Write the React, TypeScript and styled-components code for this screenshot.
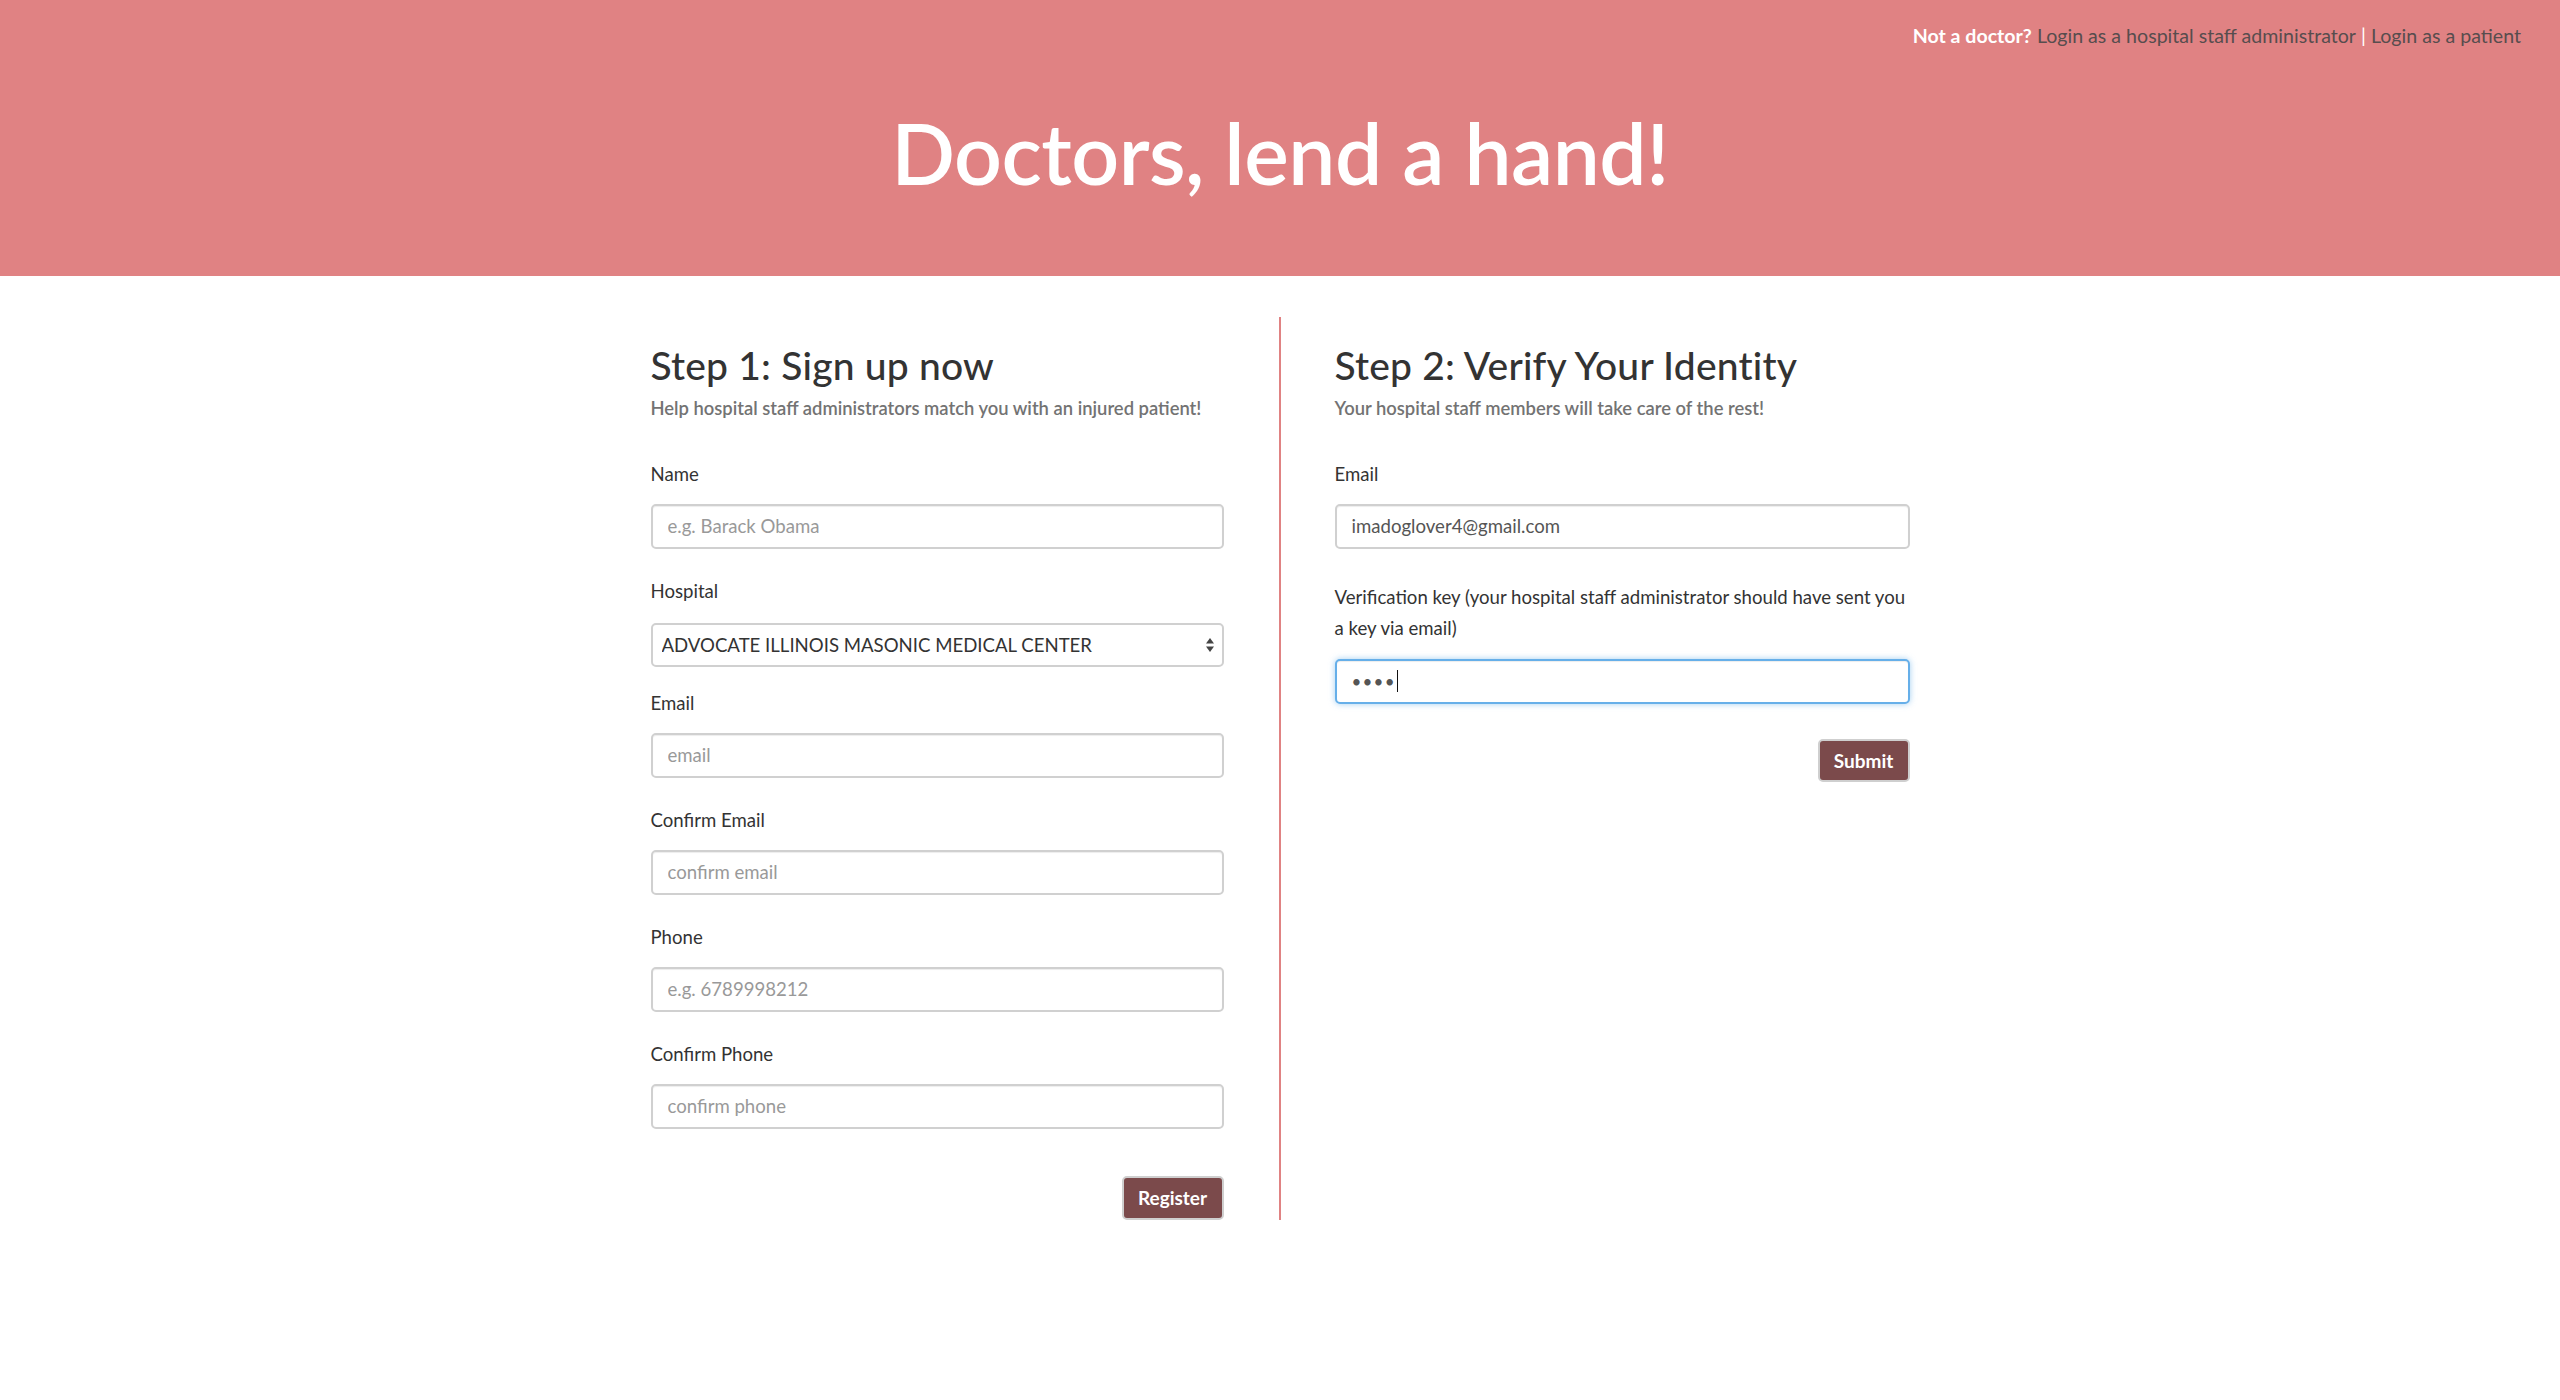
import React from "react";
import styled, { createGlobalStyle } from "styled-components";

const GlobalStyle = createGlobalStyle`
  html, body {
    margin: 0;
    padding: 0;
    background: #ffffff;
    font-family: Lato, "Open Sans", "Liberation Sans", sans-serif;
    color: #333333;
  }
  * { box-sizing: border-box; }
`;

const PINK = "#e08283";

const Header = styled.header`
  height: 276px;
  background: ${PINK};
  display: flex;
  flex-direction: column;
`;

const TopBar = styled.div`
  display: flex;
  justify-content: flex-end;
  padding: 22px 39px 0 0;
  font-size: 19.6px;
  line-height: 28px;
  color: #574d4e;
`;

const NotDoctor = styled.span`
  color: #ffffff;
  font-weight: 700;
  margin-right: 5px;
`;

const TopLink = styled.a`
  color: #574d4e;
  text-decoration: none;
`;

const Pipe = styled.span`
  color: #ffffff;
  margin: 0 5px;
`;

const Title = styled.h1`
  margin: 57px 0 0;
  text-align: center;
  color: #ffffff;
  font-size: 84px;
  font-weight: 600;
  line-height: 1.1;
  letter-spacing: -0.5px;
`;

const Row = styled.main`
  display: flex;
  width: 1259px;
  margin: 41px auto 0;
`;

const Column = styled.section<{ $side: "left" | "right" }>`
  width: ${(p) => (p.$side === "left" ? "628px" : "631px")};
  padding: ${(p) => (p.$side === "left" ? "27px 55px 0 0" : "27px 0 0 54px")};
  border-left: ${(p) => (p.$side === "right" ? `2px solid ${PINK}` : "none")};
  display: flex;
  flex-direction: column;
`;

const StepHeading = styled.h2`
  margin: 0;
  font-size: 39px;
  font-weight: 500;
  line-height: 1.1;
  color: #333333;
  letter-spacing: 0.2px;
`;

const StepSub = styled.p`
  margin: 8px 0 0;
  font-size: 18.4px;
  font-weight: 600;
  line-height: 26px;
  color: #737373;
`;

const Form = styled.form`
  margin-top: 38px;
  display: flex;
  flex-direction: column;
`;

const Group = styled.div<{ $gap?: number }>`
  display: flex;
  flex-direction: column;
  margin-bottom: ${(p) => (p.$gap ?? 27)}px;
`;

const Label = styled.label<{ $space?: number }>`
  font-size: 18.6px;
  line-height: 31px;
  color: #333333;
  margin-bottom: ${(p) => (p.$space ?? 14)}px;
`;

const TextInput = styled.input`
  height: 45px;
  width: 100%;
  border: 2px solid #d0d0d0;
  border-radius: 5px;
  padding: 0 15px;
  font-family: inherit;
  font-size: 18.6px;
  color: #555555;
  background: #ffffff;
  box-shadow: inset 0 1px 1px rgba(0, 0, 0, 0.075);
  outline: none;
  &::placeholder {
    color: #999999;
  }
`;

const SelectWrap = styled.div`
  position: relative;
`;

const Select = styled.select`
  height: 44px;
  width: 100%;
  appearance: none;
  -webkit-appearance: none;
  border: 2px solid #d0d0d0;
  border-radius: 5px;
  padding: 0 30px 0 9px;
  font-family: inherit;
  font-size: 18.6px;
  color: #333333;
  background: #ffffff;
  outline: none;
`;

const SelectArrows = styled.svg`
  position: absolute;
  right: 10px;
  top: 50%;
  transform: translateY(-50%);
  pointer-events: none;
`;

const FocusField = styled.div`
  height: 45px;
  width: 100%;
  border: 2px solid #66afe9;
  border-radius: 5px;
  padding: 0 15px;
  display: flex;
  align-items: center;
  background: #ffffff;
  box-shadow: inset 0 1px 1px rgba(0, 0, 0, 0.075), 0 0 6px rgba(102, 175, 233, 0.6);
`;

const Dots = styled.span`
  font-size: 17px;
  color: #555555;
  letter-spacing: 1.2px;
`;

const Caret = styled.span`
  display: inline-block;
  width: 1.5px;
  height: 22px;
  background: #111111;
  margin-left: 1px;
`;

const ButtonRow = styled.div<{ $top: number }>`
  display: flex;
  justify-content: flex-end;
  margin-top: ${(p) => p.$top}px;
`;

const Button = styled.button<{ $w: number; $h: number }>`
  width: ${(p) => p.$w}px;
  height: ${(p) => p.$h}px;
  background: #7b4a4b;
  color: #ffffff;
  font-family: inherit;
  font-size: 19px;
  font-weight: 700;
  border: 2px solid #cfcfcf;
  border-radius: 5px;
  padding: 0;
  cursor: pointer;
`;

export default function App() {
  return (
    <>
      <GlobalStyle />
      <Header>
        <TopBar>
          <NotDoctor>Not a doctor?</NotDoctor>
          <TopLink href="#">Login as a hospital staff administrator</TopLink>
          <Pipe>|</Pipe>
          <TopLink href="#">Login as a patient</TopLink>
        </TopBar>
        <Title>Doctors, lend a hand!</Title>
      </Header>
      <Row>
        <Column $side="left">
          <StepHeading>Step 1: Sign up now</StepHeading>
          <StepSub>Help hospital staff administrators match you with an injured patient!</StepSub>
          <Form onSubmit={(e) => e.preventDefault()}>
            <Group>
              <Label>Name</Label>
              <TextInput placeholder="e.g. Barack Obama" />
            </Group>
            <Group $gap={21}>
              <Label $space={16}>Hospital</Label>
              <SelectWrap>
                <Select defaultValue="aimmc">
                  <option value="aimmc">ADVOCATE ILLINOIS MASONIC MEDICAL CENTER</option>
                </Select>
                <SelectArrows width="8" height="14" viewBox="0 0 8 14">
                  <path d="M4 0 L8 5.5 L0 5.5 Z" fill="#444" />
                  <path d="M0 8.5 L8 8.5 L4 14 Z" fill="#444" />
                </SelectArrows>
              </SelectWrap>
            </Group>
            <Group>
              <Label>Email</Label>
              <TextInput placeholder="email" />
            </Group>
            <Group>
              <Label>Confirm Email</Label>
              <TextInput placeholder="confirm email" />
            </Group>
            <Group>
              <Label>Phone</Label>
              <TextInput placeholder="e.g. 6789998212" />
            </Group>
            <Group $gap={0}>
              <Label>Confirm Phone</Label>
              <TextInput placeholder="confirm phone" />
            </Group>
            <ButtonRow $top={47}>
              <Button $w={102} $h={44} type="submit">Register</Button>
            </ButtonRow>
          </Form>
        </Column>
        <Column $side="right">
          <StepHeading>Step 2: Verify Your Identity</StepHeading>
          <StepSub>Your hospital staff members will take care of the rest!</StepSub>
          <Form onSubmit={(e) => e.preventDefault()}>
            <Group $gap={33}>
              <Label>Email</Label>
              <TextInput defaultValue="imadoglover4@gmail.com" />
            </Group>
            <Group $gap={0}>
              <Label $space={15}>Verification key (your hospital staff administrator should have sent you a key via email)</Label>
              <FocusField>
                <Dots>••••</Dots>
                <Caret />
              </FocusField>
            </Group>
            <ButtonRow $top={35}>
              <Button $w={92} $h={43} type="submit">Submit</Button>
            </ButtonRow>
          </Form>
        </Column>
      </Row>
    </>
  );
}
